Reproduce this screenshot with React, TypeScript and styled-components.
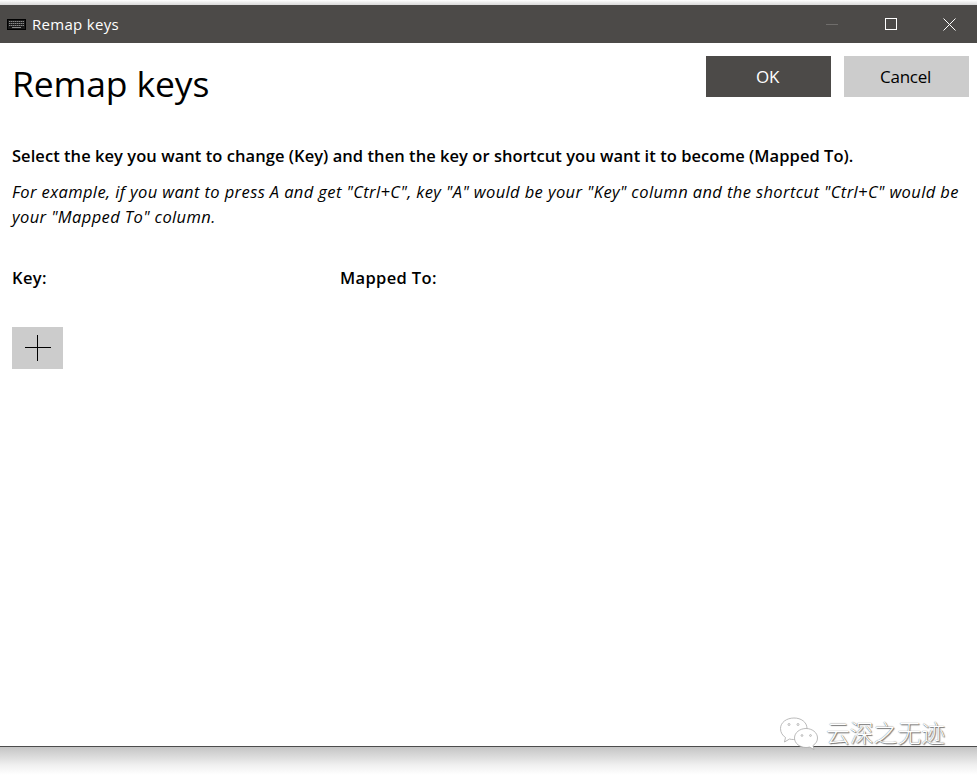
import { createGlobalStyle } from "styled-components";
import styled from "styled-components";

const GlobalStyle = createGlobalStyle`
  html, body {
    margin: 0;
    padding: 0;
    background: #ffffff;
  }
  body {
    font-family: "Open Sans", "Noto Sans", "Liberation Sans", sans-serif;
    color: #000000;
    overflow: hidden;
  }
`;

const Page = styled.div`
  position: relative;
  width: 977px;
  height: 775px;
  display: flex;
  flex-direction: column;
  overflow: hidden;
  background: #ffffff;
`;

const TopEdge = styled.div`
  height: 5px;
  background: linear-gradient(#ffffff, #d9d9d9);
`;

const TitleBar = styled.div`
  height: 38px;
  display: flex;
  align-items: center;
  background: #4c4a48;
  padding-left: 7px;
`;

const TitleText = styled.span`
  margin-left: 6px;
  font-size: 15px;
  letter-spacing: 0.3px;
  color: #ffffff;
`;

const WindowControls = styled.div`
  margin-left: auto;
  margin-right: -2px;
  display: flex;
  height: 100%;
`;

const ControlButton = styled.div`
  width: 59px;
  height: 100%;
  display: flex;
  align-items: center;
  justify-content: center;
`;

const Body = styled.div`
  height: 704px;
  box-sizing: border-box;
  padding: 13px 8px 0 12px;
  border-bottom: 1px solid #4c4c4c;
`;

const Header = styled.div`
  display: flex;
  justify-content: space-between;
`;

const Heading = styled.h1`
  margin: 0 0 2px;
  font-size: 35.5px;
  line-height: 54px;
  font-weight: 400;
  letter-spacing: -0.15px;
`;

const Actions = styled.div`
  display: flex;
  gap: 13px;
`;

const ActionButton = styled.div<{ $primary?: boolean }>`
  width: 125px;
  height: 41px;
  box-sizing: border-box;
  padding-right: 2px;
  display: flex;
  align-items: center;
  justify-content: center;
  font-size: 17px;
  letter-spacing: -0.3px;
  background: ${(p) => (p.$primary ? "#4c4a48" : "#cccccc")};
  color: ${(p) => (p.$primary ? "#ffffff" : "#000000")};
`;

const Lead = styled.p`
  margin: 32px 0 0;
  font-size: 16.5px;
  line-height: 24px;
  font-weight: 600;
  letter-spacing: 0.05px;
`;

const Example = styled.p`
  margin: 11px 0 0;
  font-size: 16.5px;
  line-height: 25px;
  font-style: italic;
  letter-spacing: 0.39px;
`;

const Columns = styled.div`
  display: grid;
  grid-template-columns: 328px 1fr;
  margin-top: 37px;
  font-size: 16.5px;
  line-height: 24px;
  font-weight: 600;
  letter-spacing: 0.35px;
`;

const AddButton = styled.div`
  width: 51px;
  height: 42px;
  margin-top: 37px;
  display: flex;
  align-items: center;
  justify-content: center;
  background: #cccccc;
`;

const Bottom = styled.div`
  flex: 1;
  background: linear-gradient(#c4c4c4, #f0f0f0 65%, #ffffff);
`;

const Watermark = styled.div`
  position: absolute;
  left: 780px;
  top: 714px;
  display: flex;
  align-items: center;
  gap: 8px;
  color: #ffffff;
  font-family: "Noto Sans CJK SC", sans-serif;
  font-size: 23.8px;
  line-height: 36px;
  font-weight: 300;
  text-shadow: 0 0 1px #555555, 1px 1px 1px #777777;
`;

const WatermarkText = styled.span`
  margin-bottom: 2px;
`;

export default function App() {
  return (
    <Page>
      <GlobalStyle />
      <TopEdge />
      <TitleBar>
        <svg width="19" height="11" viewBox="0 0 19 11" fill="none">
          <rect x="0.5" y="0.5" width="18" height="10" fill="#1a1a1a" stroke="#000" />
          <path d="M2 2.500h15M2 4.500h15M2 6.500h15" stroke="#8a8a8a" strokeDasharray="1.5 0.5" />
          <path d="M5 8.500h9" stroke="#8a8a8a" />
        </svg>
        <TitleText>Remap keys</TitleText>
        <WindowControls>
          <ControlButton>
            <svg width="12" height="2" viewBox="0 0 12 2">
              <path d="M0 1.500h12" stroke="#6f6d6b" />
            </svg>
          </ControlButton>
          <ControlButton>
            <svg width="12" height="12" viewBox="0 0 12 12" fill="none">
              <rect x="0.5" y="0.5" width="11" height="11" stroke="#fff" />
            </svg>
          </ControlButton>
          <ControlButton>
            <svg width="13" height="13" viewBox="0 0 13 13" fill="none">
              <path d="M0.5 0.500l12 12M12.500 0.500l-12 12" stroke="#fff" />
            </svg>
          </ControlButton>
        </WindowControls>
      </TitleBar>
      <Body>
        <Header>
          <Heading>Remap keys</Heading>
          <Actions>
            <ActionButton $primary>OK</ActionButton>
            <ActionButton>Cancel</ActionButton>
          </Actions>
        </Header>
        <Lead>Select the key you want to change (Key) and then the key or shortcut you want it to become (Mapped To).</Lead>
        <Example>
          For example, if you want to press A and get "Ctrl+C", key "A" would be your "Key" column and the shortcut "Ctrl+C" would be your "Mapped To" column.
        </Example>
        <Columns>
          <span>Key:</span>
          <span>Mapped To:</span>
        </Columns>
        <AddButton>
          <svg width="26" height="26" viewBox="0 0 26 26" fill="none" shapeRendering="crispEdges">
            <path d="M0 12.500h26M12.500 0v26" stroke="#000" />
          </svg>
        </AddButton>
      </Body>
      <Bottom />
      <Watermark>
        <svg width="38" height="33" viewBox="0 0 38 33" fill="#fff" stroke="#aaaaaa" strokeWidth="0.8">
          <path d="M14 1C6.500 1 .5 5.500 .5 11.500c0 4 2 7 5 9l-1 4.500 5-3c1 .4 2.500.5 4 .5 7 0 13.500-4.500 13.500-11S21 1 14 1z" />
          <path d="M26 11.500c-6 0-11.500 4-11.500 9.500S20 30.500 26 30.500c1.400 0 2.500-.2 3.500-.5l4.500 2.500-1-4c3-2 4.500-4.500 4.500-7.500C37.500 15.500 32 11.500 26 11.500z" />
          <circle cx="9" cy="7.500" r="1" fill="none" />
          <circle cx="18" cy="7.500" r="1" fill="none" />
          <circle cx="22" cy="18.500" r="0.900" fill="none" />
          <circle cx="30.500" cy="18.500" r="0.900" fill="none" />
        </svg>
        <WatermarkText>云深之无迹</WatermarkText>
      </Watermark>
    </Page>
  );
}
